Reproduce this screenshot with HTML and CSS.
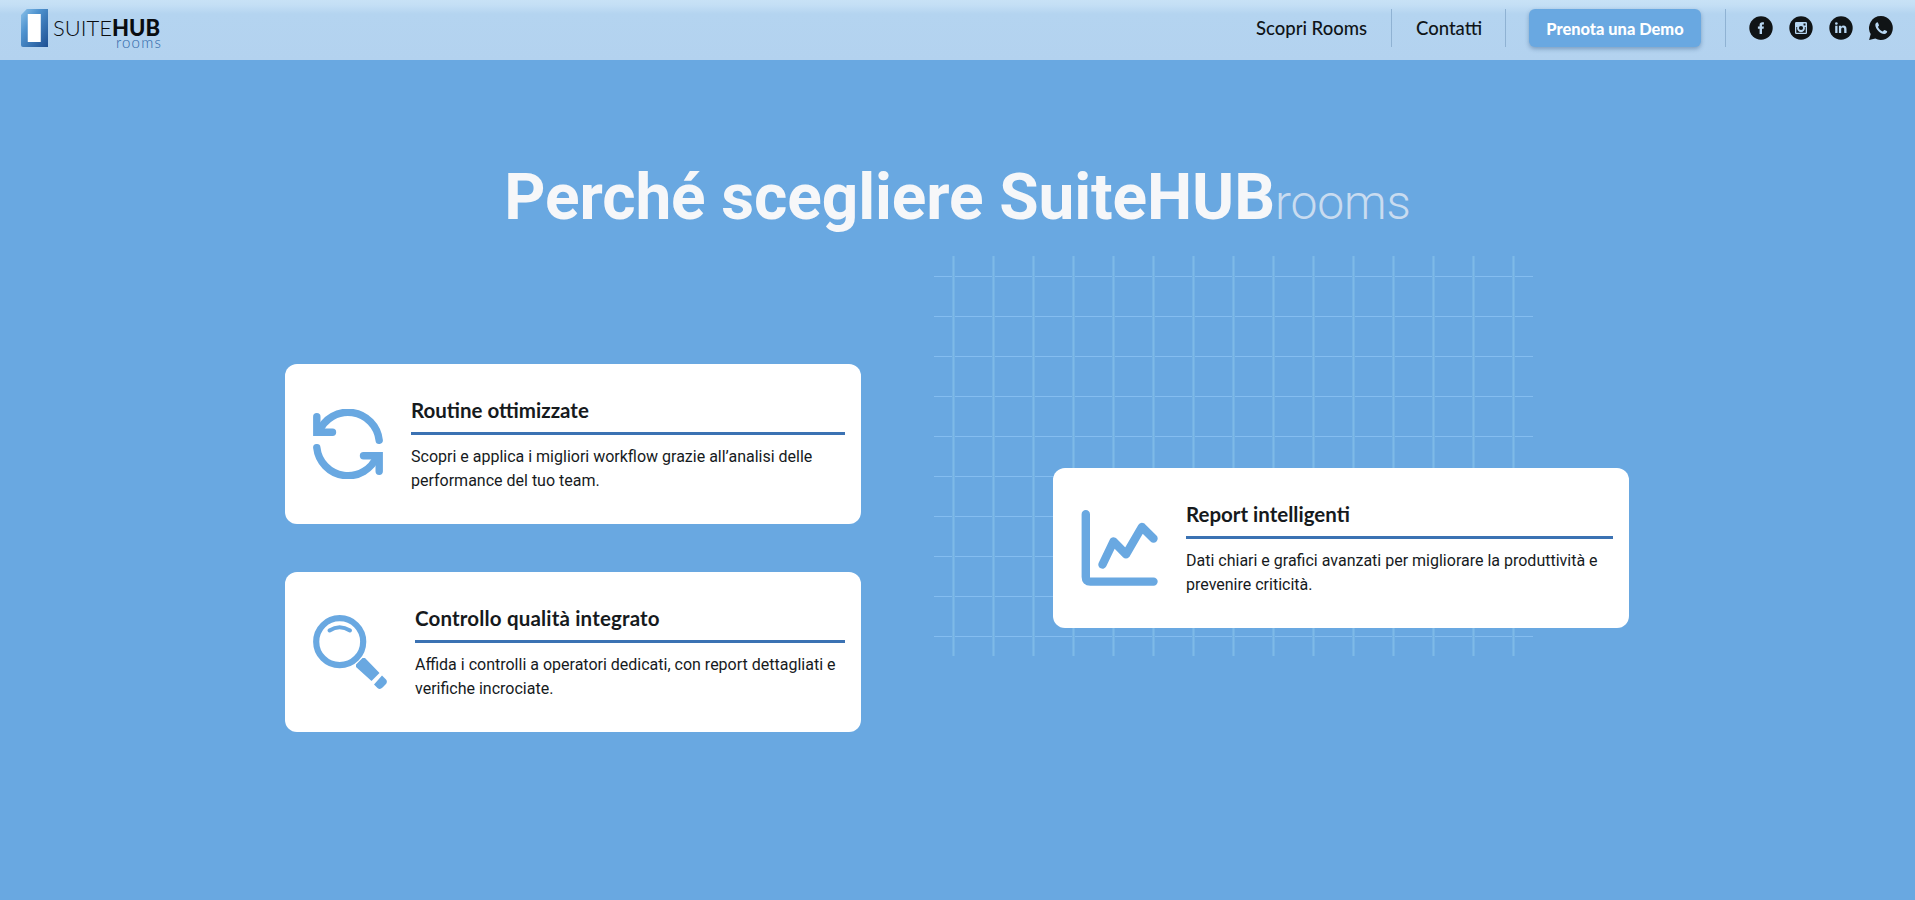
FILE: index.html
```html
<!DOCTYPE html>
<html lang="it">
<head>
<meta charset="utf-8">
<title>SuiteHUB rooms</title>
<link rel="stylesheet" href="styles.css">
</head>
<body>
<header class="header">
  <a class="logo">
    <svg class="logo-mark" viewBox="0 0 28 38" width="27" height="38" preserveAspectRatio="none">
      <defs>
        <linearGradient id="door" x1="0" y1="0" x2="1" y2="1">
          <stop offset="0" stop-color="#8cc2ea"/><stop offset=".35" stop-color="#4f93cf"/><stop offset="1" stop-color="#1d4f92"/>
        </linearGradient>
      </defs>
      <path d="M2 4 6 0H28V38H2Q0 38 0 36V6Z" fill="url(#door)"/>
      <path d="M7 5H20.500V33H7Z" fill="#fff"/>
    </svg>
    <span class="logo-text">
      <span class="logo-name">SUITE<b>HUB</b></span>
      <span class="logo-sub">rooms</span>
    </span>
  </a>
  <nav class="nav">
    <a class="link link-rooms">Scopri Rooms</a>
    <i class="sep"></i>
    <a class="link link-contact">Contatti</a>
    <i class="sep"></i>
    <a class="demo"><span>Prenota una Demo</span></a>
    <i class="sep"></i>
    <div class="social">
      <svg viewBox="0 0 24 24" width="24" height="24"><circle cx="12" cy="12" r="11.7"/><path class="cut" d="M10.6 18V12.7H8.9V10.4H10.6V9C10.6 7.1 11.6 6.2 13.3 6.2H14.9V8.4H13.9C13.2 8.4 13 8.7 13 9.3V10.4H14.9L14.6 12.7H13V18Z"/></svg>
      <svg viewBox="0 0 24 24" width="24" height="24"><circle cx="12" cy="12" r="11.7"/><path class="cut" fill-rule="evenodd" d="M7.300 6H16.700Q18 6 18 7.300V16.700Q18 18 16.700 18H7.300Q6 18 6 16.700V7.300Q6 6 7.300 6ZM14.500 7.500V9.500H16.500V7.500ZM7.300 11V16.700H16.700V11H15.700A3.900 3.900 0 1 1 8.300 11Z"/><circle class="cut" cx="12" cy="12" r="3.300"/><circle cx="12" cy="12" r="2.100"/></svg>
      <svg viewBox="0 0 24 24" width="24" height="24"><circle cx="12" cy="12" r="11.700"/><path class="cut" d="M6.200 9.700H8.500V17H6.200ZM9.900 9.700H12.100V10.700C12.600 9.900 13.400 9.500 14.500 9.500C16.600 9.500 17.500 10.800 17.500 13V17H15.200V13.400C15.200 12.200 14.900 11.500 13.800 11.500C12.600 11.500 12.200 12.300 12.200 13.400V17H9.900Z"/><circle class="cut" cx="7.350" cy="7.500" r="1.350"/></svg>
      <svg viewBox="0 0 24 24" width="24" height="24"><path d="M12 .1A11.900 11.900 0 1 1 6.300 22.500L.1 24 1.700 18A11.900 11.900 0 0 1 12 .1Z"/><path class="cut" d="M8.500 6.200C8 6 6.400 7.100 6.300 8.700C6.200 12.900 11.500 17.900 15.300 18C17 18 18.300 16.700 18.200 15.600C18.100 15.200 15.700 14.100 15.300 14.100C14.900 14.100 14.100 15.600 13.600 15.500C12 15 9.500 12.600 9 11C8.900 10.600 10 9.900 10 9.300C10 8.800 9 6.400 8.500 6.200Z"/></svg>
    </div>
  </nav>
</header>
<main class="section">
  <h1 class="title">Perché scegliere SuiteHUB<span class="title-sub">rooms</span></h1>
  <div class="features">
    <div class="grid-lines"></div>
    <div class="column">
      <article class="card">
        <svg class="icon" viewBox="0 0 70 70" width="70" height="70" fill="none" stroke="currentColor" stroke-width="7.400" stroke-linecap="round">
          <path d="M6 23A31.300 31.300 0 0 1 66.200 31.300"/><path d="M3.800 38.700A31.300 31.300 0 0 0 64 47"/>
          <path d="M3.800 7.700V23.300H19.500"/><path d="M66.200 62.300V46.700H50.500"/>
        </svg>
        <div class="body"><h2 class="card-title">Routine ottimizzate</h2><p class="text">Scopri e applica i migliori workflow grazie all’analisi delle performance del tuo team.</p></div>
      </article>
      <article class="card">
        <svg class="icon" viewBox="0 0 74 74" width="74" height="74">
          <circle cx="26.700" cy="26.700" r="23.500" fill="none" stroke="currentColor" stroke-width="6.200"/>
          <path d="M16.500 15.500Q26.500 9 37 15.500" fill="none" stroke="currentColor" stroke-width="4" stroke-linecap="round"/>
          <path d="M43 49.500 49.500 43H52L66.500 58 58.500 66 43 52ZM69 60.500 73 64.500Q75 67 72.500 69.500L69.500 72.500Q67 75 64.500 73L61 69.500Z" fill="currentColor"/>
        </svg>
        <div class="body"><h2 class="card-title card-title-wide">Controllo qualità integrato</h2><p class="text">Affida i controlli a operatori dedicati, con report dettagliati e verifiche incrociate.</p></div>
      </article>
    </div>
    <div class="column column-right">
      <article class="card">
        <svg class="icon" viewBox="0 0 77 76" width="77" height="76" fill="none" stroke="currentColor" stroke-width="8.400" stroke-linecap="round" stroke-linejoin="round">
          <path d="M4.800 4.200V67Q4.800 71.600 9.300 71.600H72.500"/><path d="M21.500 54.500 32.500 31.500 45 44.300 60.900 17 72.500 28.500"/>
        </svg>
        <div class="body"><h2 class="card-title">Report intelligenti</h2><p class="text">Dati chiari e grafici avanzati per migliorare la produttività e prevenire criticità.</p></div>
      </article>
    </div>
  </div>
</main>
</body>
</html>
```
FILE: styles.css
```css
* { box-sizing: border-box; margin: 0; padding: 0; }
body { height: 900px; overflow: hidden; background: #69a8e1; font-family: Roboto, sans-serif; color: #161a1d; }
.header { height: 60px; padding: 0 22px 0 21px; display: flex; justify-content: space-between; background: linear-gradient(#c8e2f6 0, #c4dff5 5px, #b4d4f0 14px, #b3d2ef 60px); }
.logo { display: flex; gap: 5px; padding-top: 9px; }
.logo-text { display: flex; flex-direction: column; width: 108px; padding-top: 8px; font-family: Lato, sans-serif; color: #0a0d10; }
.logo-name { font-size: 22px; line-height: 22px; font-weight: 300; white-space: nowrap; }
.logo-name b { font-weight: 900; }
.logo-sub { align-self: flex-end; margin: -4px -1px 0 0; font-size: 15px; line-height: 14px; font-weight: 300; color: #2d67a8; letter-spacing: 1.2px; }
.nav { display: flex; align-items: flex-start; padding-top: 9px; }
.link { font: 500 18.5px/39px Lato, sans-serif; color: #0f1418; white-space: nowrap; }
.link-rooms { width: 112px; margin-right: 23px; }
.link-contact { width: 66px; margin: 0 23px 0 24px; }
.sep { width: 1px; height: 38px; background: #8fb2d3; }
.demo { width: 172px; height: 38px; margin: 0 24px 0 23px; border-radius: 6px; background: #69a8e1; box-shadow: 0 2px 4px rgba(40,80,125,.4); color: #fff; font: 900 16.4px/40px Lato, sans-serif; text-align: center; white-space: nowrap; }
.social { display: flex; gap: 16px; padding-top: 7px; margin-left: 23px; fill: #101416; }
.cut { fill: #b7d6f1; }
.section { padding-top: 98px; }
.title { height: 80px; line-height: 80px; font-size: 64px; font-weight: 700; letter-spacing: -.12px; color: #f6f7f9; text-align: center; white-space: nowrap; }
.title-sub { font-size: 48px; font-weight: 300; color: #c9dcf0; }
.features { position: relative; width: 1344px; margin: 126px 0 0 285px; display: flex; justify-content: space-between; }
.grid-lines { position: absolute; left: 649px; top: -108px; width: 599px; height: 400px; background: repeating-linear-gradient(90deg, transparent 0 18px, #74b2e5 18px 19px, #7ebae7 19px 20px, #74b2e5 20px 21px, transparent 21px 40px), repeating-linear-gradient(transparent 0 20px, #84bdf0 20px 21px, transparent 21px 40px); }
.column { display: flex; flex-direction: column; gap: 48px; }
.column-right { padding-top: 104px; position: relative; }
.card { width: 576px; height: 160px; padding: 0 16px 0 28px; display: flex; align-items: center; gap: 28px; background: #fff; border-radius: 12px; }
.icon { flex: none; color: #69a8e1; }
.body { flex: 1; }
.card-title { height: 39px; border-bottom: 3px solid #3b72b3; font: 700 20.5px/29px Lato, sans-serif; white-space: nowrap; }
.card-title-wide { letter-spacing: .17px; }
.text { padding-top: 10px; margin-bottom: -1px; font-size: 16px; line-height: 24px; }
```
